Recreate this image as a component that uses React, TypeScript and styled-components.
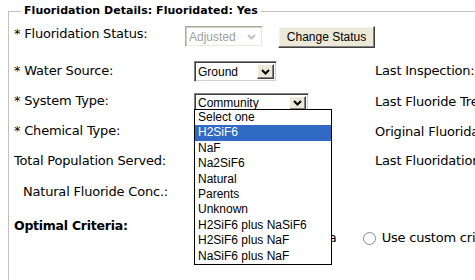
import styled, { createGlobalStyle } from 'styled-components';

const GlobalStyle = createGlobalStyle`
  html, body {
    margin: 0;
    padding: 0;
    background: #fff;
    overflow: hidden;
  }
`;

const Page = styled.div`
  width: 640px;
  height: 280px;
  padding: 4px 0 0 8px;
  box-sizing: border-box;
  overflow: hidden;
  font-family: 'DejaVu Sans', Verdana, sans-serif;
  font-size: 13px;
  color: #000;
`;

const Fieldset = styled.fieldset`
  margin: 0;
  padding: 8px 0 0 5px;
  width: 600px;
  height: 400px;
  border: 1px solid #c0c0c0;
  min-width: 0;
`;

const Legend = styled.legend`
  margin-left: 7px;
  padding: 0 3px;
  font-size: 11px;
  font-weight: 700;
  line-height: 14px;
  letter-spacing: 0.05px;
`;

const Row = styled.div<{ $h: number; $labelW?: number }>`
  display: grid;
  grid-template-columns: ${({ $labelW = 180 }) => `${$labelW}px ${361 - $labelW}px 1fr`};
  align-items: start;
  height: ${({ $h }) => $h}px;
`;

const Label = styled.div<{ $offset?: number; $indent?: number; $bold?: boolean }>`
  margin-top: ${({ $offset = 0 }) => $offset}px;
  padding-left: ${({ $indent = 0 }) => $indent}px;
  line-height: 16px;
  white-space: nowrap;
  font-weight: ${({ $bold }) => ($bold ? 700 : 400)};
  font-size: ${({ $bold }) => ($bold ? '12.5px' : '13px')};
  letter-spacing: ${({ $bold }) => ($bold ? '-0.25px' : '-0.2px')};
`;

const Controls = styled.div`
  display: flex;
  align-items: flex-start;
  gap: 15px;
`;

const SelectWrap = styled.div`
  position: relative;
`;

const SelectBox = styled.div<{ $w: number; $h: number; $disabled?: boolean }>`
  width: ${({ $w }) => $w}px;
  height: ${({ $h }) => $h}px;
  box-sizing: border-box;
  display: flex;
  align-items: center;
  background: #fff;
  border: 1px solid;
  border-color: ${({ $disabled }) =>
    $disabled ? '#aca899 #fff #fff #aca899' : '#808080 #fff #fff #808080'};
  box-shadow: ${({ $disabled }) =>
    $disabled
      ? 'inset 1px 1px 0 #d4d0c8, inset -1px -1px 0 #ece9d8'
      : 'inset 1px 1px 0 #404040, inset -1px -1px 0 #d4d0c8'};
  font-family: 'Liberation Sans', Arial, sans-serif;
  font-size: 12px;
  color: ${({ $disabled }) => ($disabled ? '#a0a0a0' : '#000')};
`;

const SelectText = styled.span`
  flex: 1;
  padding-left: 3px;
  overflow: hidden;
  white-space: nowrap;
`;

const ArrowBtn = styled.span<{ $disabled?: boolean }>`
  width: 17px;
  height: calc(100% - 4px);
  margin-right: 2px;
  box-sizing: border-box;
  display: flex;
  align-items: center;
  justify-content: center;
  background: ${({ $disabled }) => ($disabled ? '#fff' : '#ece9d8')};
  border: 1px solid;
  border-color: ${({ $disabled }) => ($disabled ? '#fff' : '#fff #404040 #404040 #fff')};
  box-shadow: ${({ $disabled }) => ($disabled ? 'none' : 'inset -1px -1px 0 #808080')};
`;

const Chevron = ({ color }: { color: string }) => (
  <svg width="9" height="6" viewBox="0 0 9 6">
    <path d="M1 1 L4.5 4.5 L8 1" fill="none" stroke={color} strokeWidth="2" />
  </svg>
);

const Select = ({ w, h, value, disabled }: { w: number; h: number; value: string; disabled?: boolean }) => (
  <SelectBox $w={w} $h={h} $disabled={disabled}>
    <SelectText>{value}</SelectText>
    <ArrowBtn $disabled={disabled}>
      <Chevron color={disabled ? '#c4c2b8' : '#000'} />
    </ArrowBtn>
  </SelectBox>
);

const Button = styled.button`
  width: 123px;
  height: 22px;
  box-sizing: border-box;
  padding: 0;
  background: #ece9d8;
  border: 1px solid;
  border-color: #fff #404040 #404040 #fff;
  box-shadow: inset -1px -1px 0 #808080, inset 1px 1px 0 #f4f3ee;
  font-family: 'Liberation Sans', Arial, sans-serif;
  font-size: 12px;
  color: #000;
`;

const DropList = styled.ul`
  position: absolute;
  top: 16px;
  left: 0;
  z-index: 2;
  width: 138px;
  margin: 0;
  padding: 0;
  list-style: none;
  box-sizing: border-box;
  background: #fff;
  border: 1px solid #000;
  font-family: 'Liberation Sans', Arial, sans-serif;
  font-size: 12px;
`;

const DropItem = styled.li<{ $active?: boolean }>`
  height: 15.4px;
  line-height: 15px;
  padding-left: 3px;
  white-space: nowrap;
  background: ${({ $active }) => ($active ? '#316ac5' : 'transparent')};
  color: ${({ $active }) => ($active ? '#fff' : '#000')};
`;

const OptionRow = styled.div`
  display: flex;
  align-items: center;
  gap: 26px;
  margin: -4px 0 0 200px;
  white-space: nowrap;
  letter-spacing: -0.2px;
`;

const Option = styled.label`
  display: flex;
  align-items: center;
  gap: 6px;
  line-height: 16px;
`;

const Radio = styled.input`
  appearance: none;
  margin: 0;
  width: 13px;
  height: 13px;
  border: 1px solid #8a8a8a;
  border-radius: 50%;
  background: #fff;
`;

const chemicals = [
  'Select one',
  'H2SiF6',
  'NaF',
  'Na2SiF6',
  'Natural',
  'Parents',
  'Unknown',
  'H2SiF6 plus NaSiF6',
  'H2SiF6 plus NaF',
  'NaSiF6 plus NaF',
];

export default function App() {
  return (
    <>
      <GlobalStyle />
      <Page>
        <Fieldset>
          <Legend>Fluoridation Details: Fluoridated: Yes</Legend>

          <Row $h={35} $labelW={171}>
            <Label>* Fluoridation Status:</Label>
            <Controls>
              <Select w={99} h={21} value="Adjusted" disabled />
              <Button type="button">Change Status</Button>
            </Controls>
          </Row>

          <Row $h={32}>
            <Label $offset={2}>* Water Source:</Label>
            <Select w={83} h={21} value="Ground" />
            <Label $offset={2}>Last Inspection:</Label>
          </Row>

          <Row $h={30}>
            <Label>* System Type:</Label>
            <SelectWrap>
              <Select w={115} h={20} value="Community" />
              <DropList>
                {chemicals.map((c) => (
                  <DropItem key={c} $active={c === 'H2SiF6'}>
                    {c}
                  </DropItem>
                ))}
              </DropList>
            </SelectWrap>
            <Label $offset={1}>Last Fluoride Treatment Date:</Label>
          </Row>

          <Row $h={30}>
            <Label>* Chemical Type:</Label>
            <div />
            <Label $offset={1}>Original Fluoridation Date:</Label>
          </Row>

          <Row $h={31}>
            <Label>Total Population Served:</Label>
            <div />
            <Label>Last Fluoridation Change:</Label>
          </Row>

          <Row $h={34}>
            <Label $indent={9}>Natural Fluoride Conc.:</Label>
          </Row>

          <Label $bold>Optimal Criteria:</Label>
          <OptionRow>
            <Option>
              <Radio type="radio" name="criteria" />
              Use CDC criteria
            </Option>
            <Option>
              <Radio type="radio" name="criteria" />
              Use custom criteria
            </Option>
          </OptionRow>
        </Fieldset>
      </Page>
    </>
  );
}
